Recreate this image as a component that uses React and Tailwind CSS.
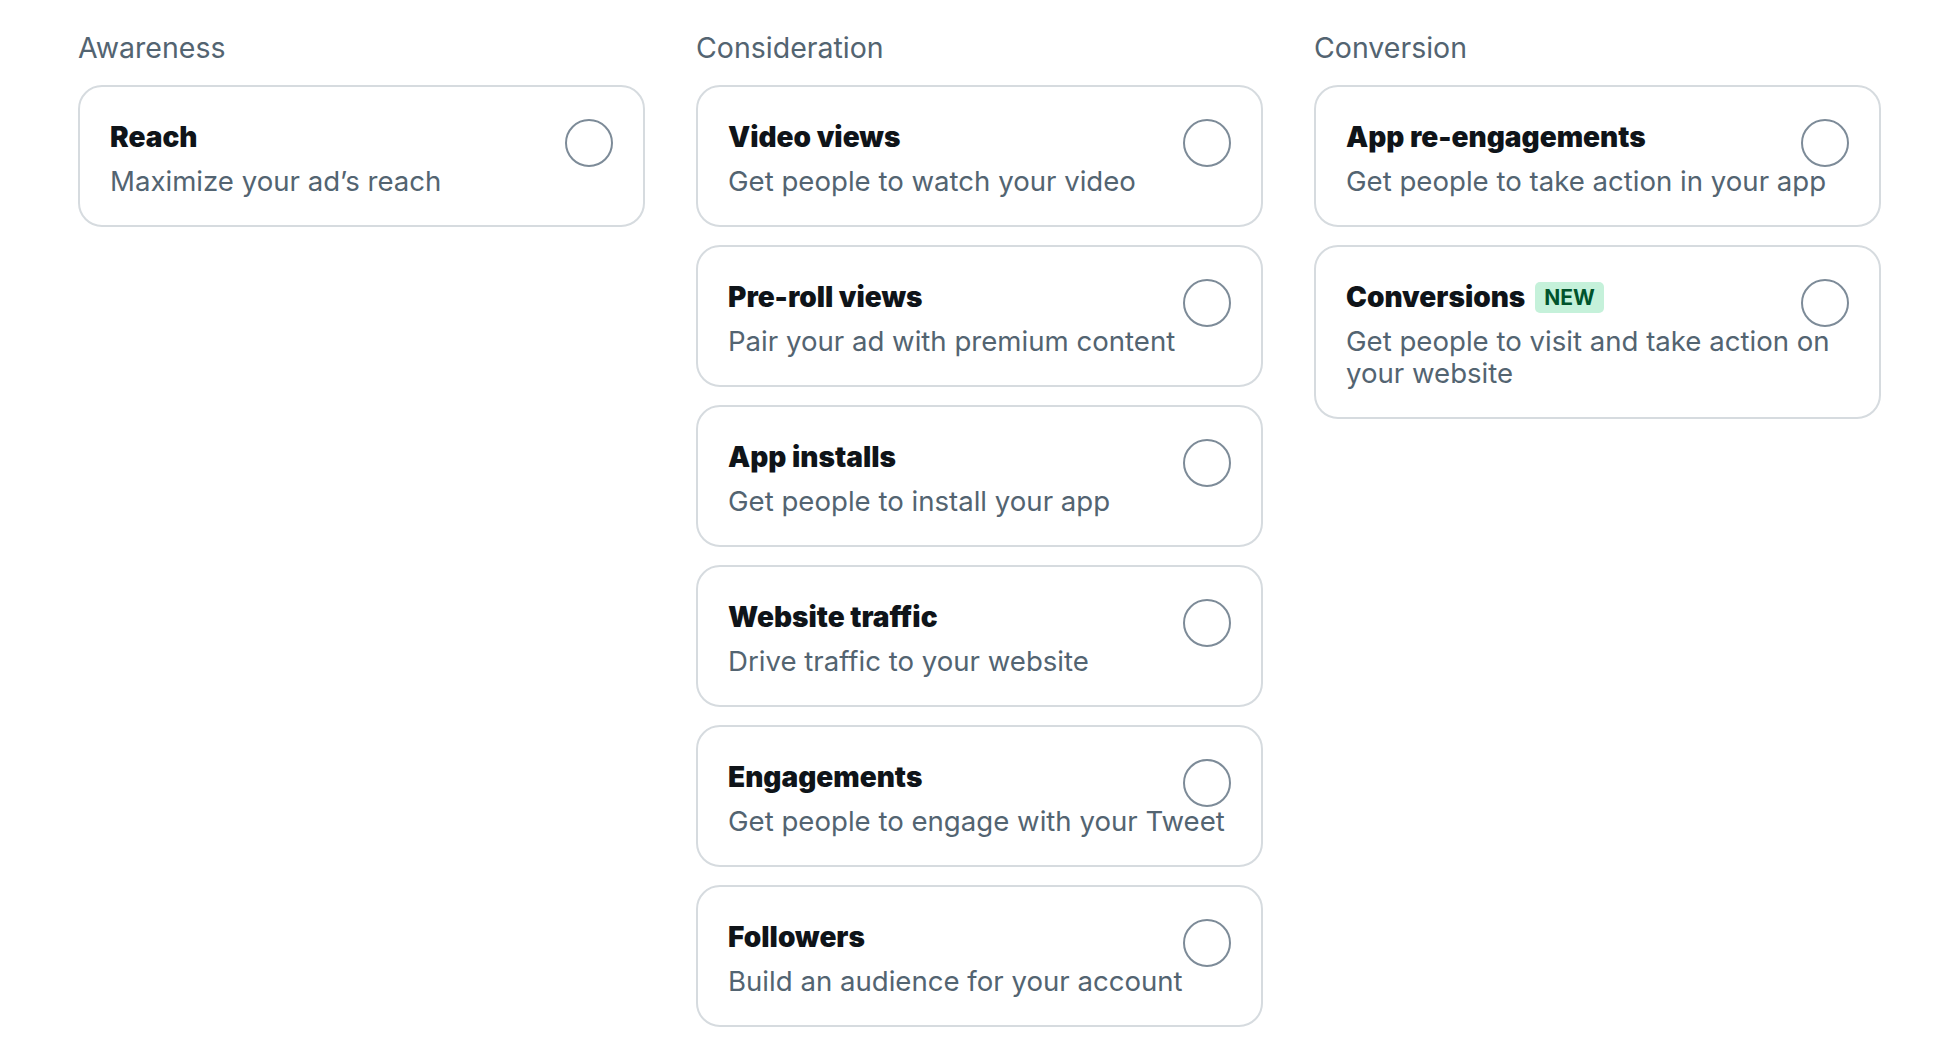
import React from "react";

const columns = [
  {
    title: "Awareness",
    items: [{ title: "Reach", desc: "Maximize your ad’s reach" }],
  },
  {
    title: "Consideration",
    items: [
      { title: "Video views", desc: "Get people to watch your video" },
      { title: "Pre-roll views", desc: "Pair your ad with premium content" },
      { title: "App installs", desc: "Get people to install your app" },
      { title: "Website traffic", desc: "Drive traffic to your website" },
      { title: "Engagements", desc: "Get people to engage with your Tweet" },
      { title: "Followers", desc: "Build an audience for your account" },
    ],
  },
  {
    title: "Conversion",
    items: [
      { title: "App re-engagements", desc: "Get people to take action in your app" },
      { title: "Conversions", desc: "Get people to visit and take action on your website", badge: "NEW" },
    ],
  },
];

function Card({ item }) {
  return (
    <div className="rounded-[24px] border-2 border-[#d6dbdf] bg-white px-[30px] pt-[32px] pb-[28px]">
      <div className="flex h-[36px] items-start justify-between">
        <div className="flex items-center gap-[10px]">
          <span className="text-[28px] leading-[36px] font-black text-[#0f1419]">
            {item.title}
          </span>
          {item.badge && (
            <span className="rounded-[5px] bg-[#c5f1da] px-[9px] py-[2px] text-[21px] leading-[27px] font-bold text-[#00532c]">
              {item.badge}
            </span>
          )}
        </div>
        <div className="h-[48px] w-[48px] shrink-0 rounded-full border-2 border-[#7d8b98]" />
      </div>
      <p className="mt-[10px] text-[27.6px] leading-[32px] text-[#536471]">{item.desc}</p>
    </div>
  );
}

export default function App() {
  return (
    <div
      className="min-h-screen bg-white pt-[30px] pl-[78px]"
      style={{ fontFamily: "Inter, 'Noto Sans', sans-serif" }}
    >
      <div className="grid grid-cols-[567px_567px_567px] gap-x-[51px]">
        {columns.map((col) => (
          <div key={col.title} className="flex flex-col">
            <h2 className="mb-[19px] text-[28.5px] leading-[36px] text-[#536471]">{col.title}</h2>
            <div className="flex flex-col gap-[18px]">
              {col.items.map((it) => (
                <Card key={it.title} item={it} />
              ))}
            </div>
          </div>
        ))}
      </div>
    </div>
  );
}
